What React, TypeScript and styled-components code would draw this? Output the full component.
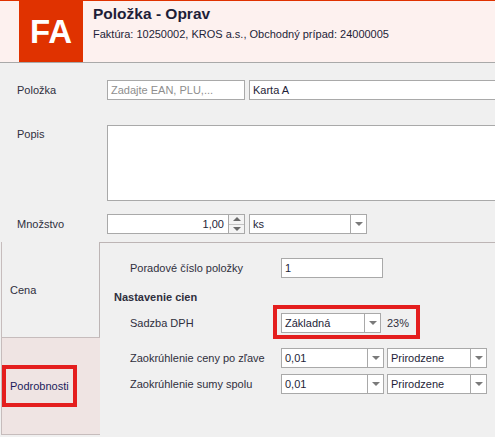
import styled, { createGlobalStyle } from "styled-components";

const GlobalStyle = createGlobalStyle`
  html, body {
    margin: 0;
    padding: 0;
    background: #f0f0f0;
  }
  body {
    font-family: "Liberation Sans", Arial, sans-serif;
  }
`;

const Window = styled.div`
  width: 495px;
  height: 437px;
  overflow: hidden;
  display: flex;
  flex-direction: column;
  background: #f0f0f0;
  color: #2e2e3e;
  font-size: 11px;
`;

const Header = styled.header`
  display: flex;
  flex-shrink: 0;
  height: 61px;
  padding-left: 19px;
  background: #fdf1ef;
  border-top: 1px solid #e03200;
  border-bottom: 1px solid #a9a9a9;
`;

const Badge = styled.div`
  width: 64px;
  display: flex;
  align-items: center;
  justify-content: center;
  background: #e03200;
  color: #fff;
  font-size: 33px;
  font-weight: bold;
`;

const HeaderText = styled.div`
  display: flex;
  flex-direction: column;
  padding-left: 10px;
`;

const Title = styled.div`
  margin-top: 4px;
  font-size: 15.5px;
  line-height: 18px;
  font-weight: bold;
  color: #1e1e38;
`;

const Subtitle = styled.div`
  margin-top: 4px;
  line-height: 14px;
  color: #1e1e38;
`;

const Form = styled.div`
  display: flex;
  flex-direction: column;
  padding: 17px 0 0 17px;
`;

const Row = styled.div<{ $top?: number; $start?: boolean }>`
  display: flex;
  align-items: ${(p) => (p.$start ? "flex-start" : "center")};
  gap: 4px;
  margin-top: ${(p) => p.$top ?? 0}px;
`;

const Label = styled.div<{ $width: number; $pad?: number }>`
  width: ${(p) => p.$width}px;
  flex-shrink: 0;
  padding-top: ${(p) => p.$pad ?? 0}px;
  line-height: 14px;
  color: #2f2f3d;
`;

const TextBox = styled.div<{ $width: number; $muted?: boolean; $right?: boolean }>`
  box-sizing: border-box;
  width: ${(p) => p.$width}px;
  height: 20px;
  flex-shrink: 0;
  display: flex;
  align-items: center;
  justify-content: ${(p) => (p.$right ? "flex-end" : "flex-start")};
  padding: 0 3px;
  background: #fff;
  border: 1px solid #a9a9a9;
  color: ${(p) => (p.$muted ? "#8e8e8e" : "#1e1e38")};
  white-space: nowrap;
`;

const TextArea = styled.div`
  box-sizing: border-box;
  width: 420px;
  height: 76px;
  flex-shrink: 0;
  background: #fff;
  border: 1px solid #a9a9a9;
`;

const SpinBox = styled.div`
  box-sizing: border-box;
  width: 138px;
  height: 20px;
  flex-shrink: 0;
  display: flex;
  background: #fff;
  border: 1px solid #a9a9a9;
`;

const SpinValue = styled.div`
  flex: 1;
  display: flex;
  align-items: center;
  justify-content: flex-end;
  padding-right: 4px;
  color: #1e1e38;
`;

const SpinButtons = styled.div`
  width: 15px;
  display: flex;
  flex-direction: column;
  border-left: 1px solid #a9a9a9;
  background: #f4f4f4;
`;

const SpinHalf = styled.div<{ $down?: boolean }>`
  flex: 1;
  display: flex;
  align-items: center;
  justify-content: center;
  border-top: ${(p) => (p.$down ? "1px solid #c4c4c4" : "none")};
`;

const Arrow = styled.span<{ $up?: boolean }>`
  width: 0;
  height: 0;
  border-left: 4px solid transparent;
  border-right: 4px solid transparent;
  ${(p) =>
    p.$up
      ? "border-bottom: 4px solid #6a6a6a;"
      : "border-top: 4px solid #6a6a6a;"}
`;

const Combo = styled.div<{ $width: number }>`
  box-sizing: border-box;
  width: ${(p) => p.$width}px;
  height: 20px;
  flex-shrink: 0;
  display: flex;
  background: #fff;
  border: 1px solid #a9a9a9;
  color: #1e1e38;
`;

const ComboValue = styled.div`
  flex: 1;
  display: flex;
  align-items: center;
  padding-left: 3px;
  white-space: nowrap;
`;

const ComboButton = styled.div`
  width: 15px;
  display: flex;
  align-items: center;
  justify-content: center;
  border-left: 1px solid #a9a9a9;
`;

const ComboArrow = styled.span`
  width: 0;
  height: 0;
  border-left: 4px solid transparent;
  border-right: 4px solid transparent;
  border-top: 4px solid #7a7a7a;
`;

const TabArea = styled.div`
  flex: 1;
  display: flex;
  margin-top: 8px;
`;

const TabList = styled.div`
  width: 100px;
  flex-shrink: 0;
  display: flex;
  flex-direction: column;
`;

const Tab = styled.div<{ $active?: boolean; $height: number }>`
  box-sizing: border-box;
  height: ${(p) => p.$height}px;
  margin-left: 1px;
  display: flex;
  align-items: center;
  padding-left: 8px;
  border-left: 1px solid #c6bcbc;
  border-right: ${(p) => (p.$active ? "none" : "1px solid #bdb5b5")};
  border-top: ${(p) => (p.$active ? "1px solid #c6bcbc" : "none")};
  border-bottom: ${(p) => (p.$active ? "1px solid #c6bcbc" : "none")};
  background: ${(p) => (p.$active ? "#efe4e3" : "transparent")};
  color: ${(p) => (p.$active ? "#1c1c5c" : "#2f2f3d")};
`;

const TabLabel = styled.span<{ $marked?: boolean }>`
  position: relative;
  line-height: 14px;

  ${(p) =>
    p.$marked &&
    `
    &::after {
      content: "";
      position: absolute;
      left: -8px;
      top: -14px;
      width: 75px;
      height: 42px;
      box-sizing: border-box;
      border: 4px solid #e41e1e;
    }
  `}
`;

const Panel = styled.div`
  flex: 1;
  display: flex;
  flex-direction: column;
  padding: 15px 0 0 14px;
  border-top: 1px solid #bdb5b5;
`;

const FieldRow = styled.div<{ $top?: number }>`
  display: flex;
  align-items: center;
  padding-left: 16px;
  margin-top: ${(p) => p.$top ?? 0}px;
`;

const SectionTitle = styled.div`
  margin-top: 12px;
  line-height: 14px;
  font-weight: bold;
  color: #2f2f3d;
`;

const Marked = styled.div`
  position: relative;
  display: flex;
  align-items: center;
  gap: 6px;

  &::after {
    content: "";
    position: absolute;
    left: -8px;
    top: -8px;
    width: 147px;
    height: 34px;
    box-sizing: border-box;
    border: 4px solid #e41e1e;
  }
`;

const Rate = styled.span`
  color: #2f2f3d;
`;

const Gap = styled.div`
  width: 3px;
  flex-shrink: 0;
`;

function Dropdown({ value, width }: { value: string; width: number }) {
  return (
    <Combo $width={width}>
      <ComboValue>{value}</ComboValue>
      <ComboButton>
        <ComboArrow />
      </ComboButton>
    </Combo>
  );
}

export default function App() {
  return (
    <>
      <GlobalStyle />
      <Window>
        <Header>
          <Badge>FA</Badge>
          <HeaderText>
            <Title>Položka - Oprav</Title>
            <Subtitle>Faktúra: 10250002, KROS a.s., Obchodný prípad: 24000005</Subtitle>
          </HeaderText>
        </Header>

        <Form>
          <Row>
            <Label $width={86}>Položka</Label>
            <TextBox $width={138} $muted>
              Zadajte EAN, PLU,...
            </TextBox>
            <TextBox $width={300}>Karta A</TextBox>
          </Row>
          <Row $top={25} $start>
            <Label $width={86} $pad={2}>
              Popis
            </Label>
            <TextArea />
          </Row>
          <Row $top={13}>
            <Label $width={86}>Množstvo</Label>
            <SpinBox>
              <SpinValue>1,00</SpinValue>
              <SpinButtons>
                <SpinHalf>
                  <Arrow $up />
                </SpinHalf>
                <SpinHalf $down>
                  <Arrow />
                </SpinHalf>
              </SpinButtons>
            </SpinBox>
            <Dropdown value="ks" width={118} />
          </Row>
        </Form>

        <TabArea>
          <TabList>
            <Tab $height={95}>
              <TabLabel>Cena</TabLabel>
            </Tab>
            <Tab $height={98} $active>
              <TabLabel $marked>Podrobnosti</TabLabel>
            </Tab>
          </TabList>

          <Panel>
            <FieldRow>
              <Label $width={151}>Poradové číslo položky</Label>
              <TextBox $width={102}>1</TextBox>
            </FieldRow>
            <SectionTitle>Nastavenie cien</SectionTitle>
            <FieldRow $top={9}>
              <Label $width={151}>Sadzba DPH</Label>
              <Marked>
                <Dropdown value="Základná" width={100} />
                <Rate>23%</Rate>
              </Marked>
            </FieldRow>
            <FieldRow $top={15}>
              <Label $width={151}>Zaokrúhlenie ceny po zľave</Label>
              <Dropdown value="0,01" width={103} />
              <Gap />
              <Dropdown value="Prirodzene" width={100} />
            </FieldRow>
            <FieldRow $top={6}>
              <Label $width={151}>Zaokrúhlenie sumy spolu</Label>
              <Dropdown value="0,01" width={103} />
              <Gap />
              <Dropdown value="Prirodzene" width={100} />
            </FieldRow>
          </Panel>
        </TabArea>
      </Window>
    </>
  );
}
